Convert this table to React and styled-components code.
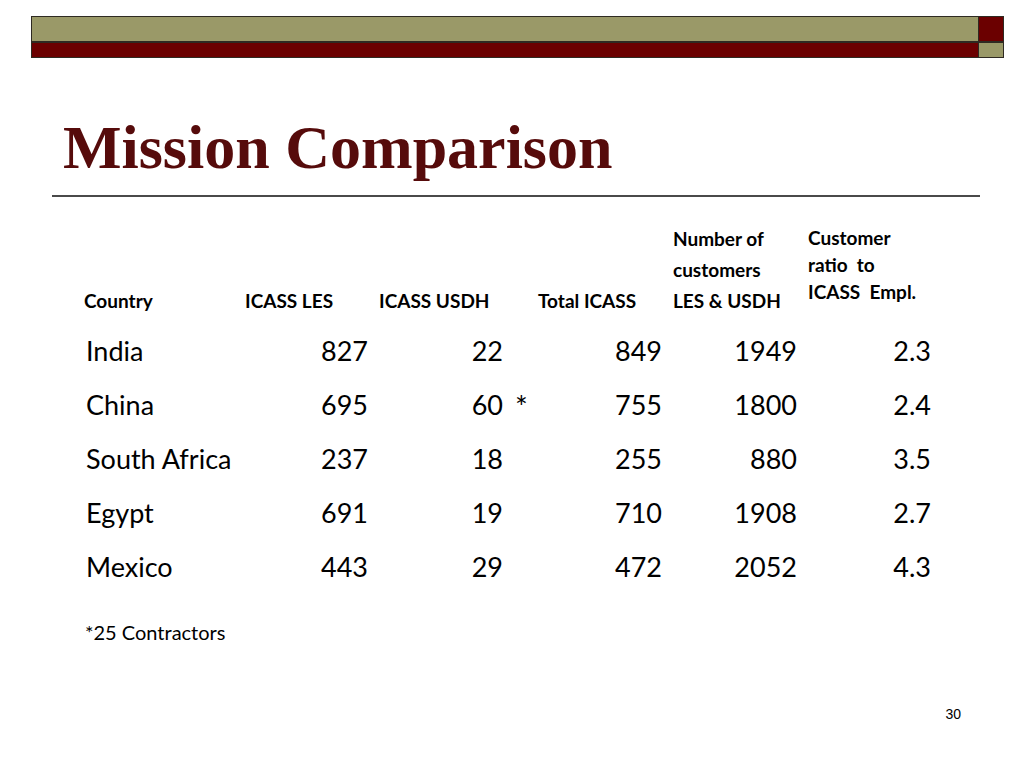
import React from 'react';
import styled, { createGlobalStyle } from 'styled-components';

const GlobalStyle = createGlobalStyle`
  html, body {
    margin: 0;
    padding: 0;
    background: #ffffff;
  }
  body {
    font-family: Lato, "Open Sans", sans-serif;
    color: #000;
  }
`;

const Slide = styled.div`
  width: 1024px;
  height: 768px;
  box-sizing: border-box;
  padding-top: 16px;
  overflow: hidden;
`;

const TopBar = styled.div`
  display: flex;
  width: 973px;
  margin-left: 31px;
`;

const Bands = styled.div`
  flex: 1;
  display: flex;
  flex-direction: column;
`;

const Corner = styled.div`
  width: 26px;
  display: flex;
  flex-direction: column;
`;

const Block = styled.div`
  box-sizing: border-box;
  height: ${p => p.$h}px;
  background: ${p => p.$color};
  border: 1px solid #2e2a22;
  border-top-width: ${p => (p.$top ? 1 : 0)}px;
  border-right-width: ${p => (p.$right ? 1 : 0)}px;
`;

const Title = styled.h1`
  margin: 58px 0 0 63px;
  font-family: "Liberation Serif", "Times New Roman", serif;
  font-weight: bold;
  font-size: 62px;
  line-height: 1;
  color: #560b0b;
`;

const Rule = styled.div`
  margin: 17px 44px 0 52px;
  height: 2px;
  background: #4a4a4a;
`;

const Table = styled.div`
  margin: 26px 0 0 84px;
  display: grid;
  grid-template-columns: 161px 125px 135px 159px 135px 134px;
`;

const Head = styled.div`
  align-self: end;
  margin-bottom: 8px;
  font-weight: bold;
  font-size: 19px;
  line-height: ${p => p.$lh || 31}px;
  padding-left: ${p => p.$pad || 0}px;
  padding-bottom: ${p => p.$lift || 0}px;
`;

const Cell = styled.div`
  position: relative;
  height: 54px;
  font-size: 27px;
  line-height: 54px;
  text-align: ${p => (p.$left ? 'left' : 'right')};
  padding: ${p => (p.$left ? '0 0 0 2px' : '0 2px 0 0')};
`;

const Mark = styled.span`
  position: absolute;
  left: calc(100% + 10px);
  top: 1px;
  font-size: 30px;
`;

const Note = styled.div`
  margin: 26px 0 0 85px;
  font-size: 20px;
  line-height: 1.2;
`;

const Footer = styled.div`
  display: flex;
  justify-content: flex-end;
  padding-right: 63px;
  margin-top: 62px;
  font-family: "Liberation Sans", Arial, sans-serif;
  font-size: 14px;
  line-height: 16px;
`;

const rows = [
  ['India', '827', '22', '849', '1949', '2.3'],
  ['China', '695', '60', '755', '1800', '2.4', true],
  ['South Africa', '237', '18', '255', '880', '3.5'],
  ['Egypt', '691', '19', '710', '1908', '2.7'],
  ['Mexico', '443', '29', '472', '2052', '4.3'],
];

export default function App() {
  return (
    <Slide>
      <GlobalStyle />
      <TopBar>
        <Bands>
          <Block $h={26} $color="#9a9968" $top />
          <Block $h={16} $color="#6b0000" $top />
        </Bands>
        <Corner>
          <Block $h={26} $color="#6b0000" $top $right />
          <Block $h={16} $color="#9a9968" $top $right />
        </Corner>
      </TopBar>

      <Title>Mission Comparison</Title>
      <Rule />

      <Table>
        <Head>Country</Head>
        <Head>ICASS LES</Head>
        <Head $pad={9}>ICASS USDH</Head>
        <Head $pad={33}>Total ICASS</Head>
        <Head $pad={9}>
          Number of<br />customers<br />LES &amp; USDH
        </Head>
        <Head $pad={9} $lh={27} $lift={11}>
          Customer<br />ratio&nbsp; to<br />ICASS&nbsp; Empl.
        </Head>

        {rows.map(([country, les, usdh, total, cust, ratio, marked]) => (
          <React.Fragment key={country}>
            <Cell $left>{country}</Cell>
            <Cell>{les}</Cell>
            <Cell>
              {usdh}
              {marked && <Mark>*</Mark>}
            </Cell>
            <Cell>{total}</Cell>
            <Cell>{cust}</Cell>
            <Cell>{ratio}</Cell>
          </React.Fragment>
        ))}
      </Table>

      <Note>*25 Contractors</Note>
      <Footer>30</Footer>
    </Slide>
  );
}
